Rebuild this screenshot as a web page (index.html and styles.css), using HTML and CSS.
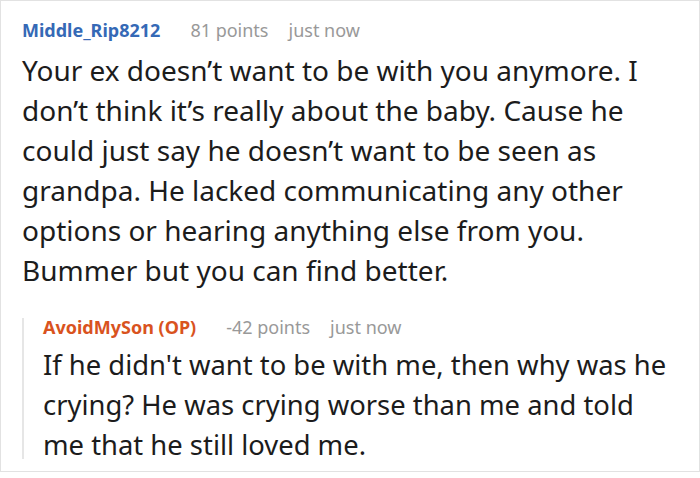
FILE: index.html
```html
<!DOCTYPE html>
<html>
<head>
<meta charset="utf-8">
<link rel="stylesheet" href="styles.css">
</head>
<body>
<div class="card">
  <div class="meta">
    <span class="user user-blue">Middle_Rip8212</span>
    <span class="info">81 points</span>
    <span class="info">just now</span>
  </div>
  <p class="text">Your ex doesn’t want to be with you anymore. I don’t think it’s really about the baby. Cause he could just say he doesn’t want to be seen as grandpa. He lacked communicating any other options or hearing anything else from you. Bummer but you can find better.</p>
  <div class="reply">
    <div class="meta meta-reply">
      <span class="user user-orange">AvoidMySon (OP)</span>
      <span class="info">-42 points</span>
      <span class="info">just now</span>
    </div>
    <p class="text text-reply">If he didn't want to be with me, then why was he crying? He was crying worse than me and told me that he still loved me.</p>
  </div>
</div>
</body>
</html>
```

FILE: styles.css
```css
html, body {
  margin: 0;
  padding: 0;
  background: #fff;
}
.card {
  width: 700px;
  height: 472px;
  box-sizing: border-box;
  border: 1px solid #e2e2e2;
  padding: 9px 20px 0 21px;
  font-family: "Noto Sans", "Open Sans", sans-serif;
  color: #1c1c1c;
}
.meta {
  display: flex;
  font-size: 18px;
  line-height: 40px;
}
.user {
  font-weight: 700;
  margin-right: 30px;
}
.user-blue { color: #3569b6; }
.user-orange { color: #d9531e; }
.info {
  color: #999;
  margin-right: 20px;
}
.text {
  margin: 0;
  font-size: 28px;
  line-height: 40px;
}
.reply {
  margin-top: 28px;
  border-left: 2px solid #e6e6e6;
  padding-left: 19px;
  height: 141px;
}
.meta-reply {
  line-height: 18px;
  margin-bottom: 9px;
}
.text-reply {
  font-size: 27.4px;
}
```
